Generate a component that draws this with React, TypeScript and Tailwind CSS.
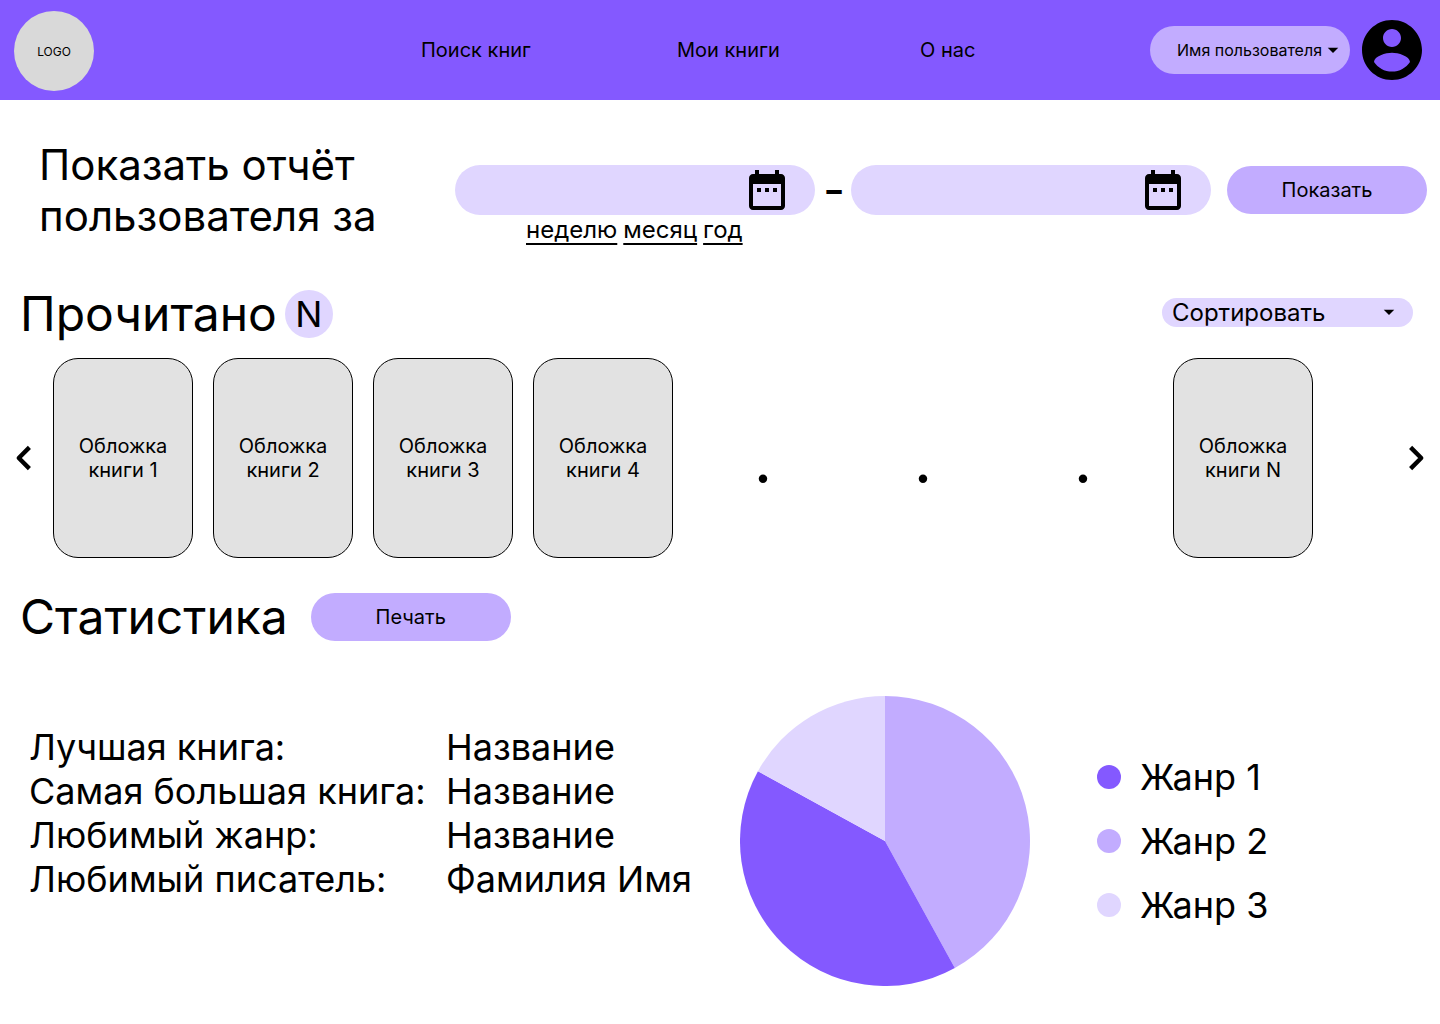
import React from "react";

const periods = ["неделю", "месяц", "год"];

const slots = [
  "Обложка книги 1",
  "Обложка книги 2",
  "Обложка книги 3",
  "Обложка книги 4",
  null,
  null,
  null,
  "Обложка книги N",
];

const stats = [
  ["Лучшая книга:", "Название"],
  ["Самая большая книга:", "Название"],
  ["Любимый жанр:", "Название"],
  ["Любимый писатель:", "Фамилия Имя"],
];

const legend = [
  { name: "Жанр 1", dot: "bg-[#8459ff]" },
  { name: "Жанр 2", dot: "bg-[#c2acff]" },
  { name: "Жанр 3", dot: "bg-[#e0d6ff]" },
];

const slices = [
  { from: 0, to: 0.42, fill: "fill-[#c2acff]" },
  { from: 0.42, to: 0.83, fill: "fill-[#8459ff]" },
  { from: 0.83, to: 1, fill: "fill-[#e0d6ff]" },
];

function slicePath(from: number, to: number) {
  const r = 145;
  const point = (part: number) => {
    const a = part * 2 * Math.PI;
    return `${r + r * Math.sin(a)} ${r - r * Math.cos(a)}`;
  };
  return `M${r} ${r}L${point(from)}A${r} ${r} 0 0 1 ${point(to)}Z`;
}

function Icon({ d, className, viewBox = "0 0 24 24" }: { d: string; className: string; viewBox?: string }) {
  return (
    <svg viewBox={viewBox} className={className} fill="currentColor" aria-hidden="true">
      <path d={d} />
    </svg>
  );
}

function Chevron({ points }: { points: string }) {
  return (
    <svg viewBox="0 0 24 24" className="size-12" fill="none" stroke="currentColor" strokeWidth="2.2" aria-hidden="true">
      <polyline points={points} strokeLinejoin="round" />
    </svg>
  );
}

const CARET = "M6.75 9.75l5.25 5.25 5.25-5.25z";
const CALENDAR =
  "M9 11H7v2h2v-2zm4 0h-2v2h2v-2zm4 0h-2v2h2v-2zm2-7h-1V2h-2v2H8V2H6v2H5c-1.11 0-1.99.9-1.99 2L3 20c0 1.1.89 2 2 2h14c1.1 0 2-.9 2-2V6c0-1.1-.9-2-2-2zm0 16H5V9h14v11z";
const ACCOUNT =
  "M12 2C6.48 2 2 6.48 2 12s4.48 10 10 10 10-4.48 10-10S17.52 2 12 2zm0 3c1.66 0 3 1.34 3 3s-1.34 3-3 3-3-1.34-3-3 1.34-3 3-3zm0 14.2c-2.5 0-4.71-1.28-6-3.22.03-1.99 4-3.08 6-3.08 1.99 0 5.97 1.09 6 3.08-1.29 1.94-3.5 3.22-6 3.22z";

function DateField({ label }: { label: string }) {
  return (
    <div className="flex h-[50px] min-w-0 flex-1 items-center rounded-full bg-[#e0d6ff] pr-6 pl-6">
      <input type="text" aria-label={label} className="w-0 min-w-0 flex-1 bg-transparent text-xl outline-none" />
      <button type="button" aria-label="Открыть календарь" className="shrink-0">
        <Icon d={CALENDAR} className="size-12" />
      </button>
    </div>
  );
}

export default function App() {
  return (
    <div className="min-h-screen bg-white font-['Inter',sans-serif] text-black">
      <header className="flex h-[100px] items-center bg-[#8459ff] pr-[18px] pl-3.5">
        <a
          href="#"
          className="mt-0.5 flex size-20 shrink-0 items-center justify-center rounded-full bg-[#d9d9d9] pt-0.5 text-xs"
        >
          LOGO
        </a>
        <nav className="ml-[327px] grid flex-1 grid-cols-[256fr_243fr_230fr] text-xl leading-6">
          <a href="#">Поиск книг</a>
          <a href="#">Мои книги</a>
          <a href="#">О нас</a>
        </nav>
        <button
          type="button"
          className="flex h-12 w-[200px] shrink-0 items-center justify-end rounded-full bg-[#c2acff] pr-[5px]"
        >
          <span className="whitespace-nowrap">Имя пользователя</span>
          <Icon d={CARET} className="-ml-px size-6" />
        </button>
        <a href="#" aria-label="Профиль" className="ml-3 shrink-0">
          <Icon d={ACCOUNT} viewBox="2 2 20 20" className="size-[60px]" />
        </a>
      </header>

      <main>
        <form className="flex items-start pt-[39px] pr-[13px] pl-[39px]">
          <h1 className="w-[416px] shrink-0 text-[42px] leading-[51px]">
            Показать отчёт
            <br />
            пользователя за
          </h1>
          <div className="min-w-0 flex-1 pt-[26px]">
            <div className="flex items-center">
              <DateField label="Начало периода" />
              <span className="w-9 shrink-0 pl-0.5 text-center text-5xl leading-[50px]">-</span>
              <DateField label="Конец периода" />
              <button
                type="button"
                className="ml-4 h-12 w-[200px] shrink-0 rounded-full bg-[#c2acff] text-xl leading-6"
              >
                Показать
              </button>
            </div>
            <div className="flex gap-1.5 pl-[71px] text-2xl leading-[29px]">
              {periods.map((p) => (
                <a key={p} href="#" className="underline underline-offset-[5px] [text-decoration-skip-ink:none]">
                  {p}
                </a>
              ))}
            </div>
          </div>
        </form>

        <section className="mt-[41px]">
          <div className="flex items-center pr-[27px] pl-5">
            <h2 className="text-5xl leading-[58px]">Прочитано</h2>
            <span className="ml-2 flex size-12 items-center justify-center rounded-full bg-[#e0d6ff] text-4xl">N</span>
            <div className="relative mb-[3px] ml-auto">
              <select
                aria-label="Сортировать"
                className="block h-[29px] w-[251px] appearance-none rounded-full bg-[#e0d6ff] pl-2.5 text-2xl leading-[29px]"
              >
                <option>Сортировать</option>
              </select>
              <Icon d={CARET} className="pointer-events-none absolute top-0.5 right-3 size-6" />
            </div>
          </div>
          <div className="mt-[15px] flex items-center">
            <button type="button" aria-label="Назад" className="shrink-0">
              <Chevron points="14.7,6.7 9.4,12 14.7,17.3" />
            </button>
            <ul className="mr-[79px] ml-[5px] grid flex-1 grid-cols-8 gap-5">
              {slots.map((title, i) =>
                title ? (
                  <li
                    key={i}
                    className="flex h-[200px] items-center justify-center rounded-[25px] border border-black bg-[#e2e2e2] px-5 text-center text-xl leading-6"
                  >
                    {title}
                  </li>
                ) : (
                  <li key={i} className="flex h-[200px] items-center justify-center pt-1 text-[64px]">
                    .
                  </li>
                ),
              )}
            </ul>
            <button type="button" aria-label="Вперёд" className="shrink-0">
              <Chevron points="9.3,6.7 14.6,12 9.3,17.3" />
            </button>
          </div>
        </section>

        <section className="mt-[30px]">
          <div className="flex items-center pl-5">
            <h2 className="text-5xl leading-[58px]">Статистика</h2>
            <button type="button" className="ml-[23px] h-12 w-[200px] rounded-full bg-[#c2acff] text-xl leading-6">
              Печать
            </button>
          </div>
          <div className="mt-[50px] flex items-start pl-[29px]">
            <table className="mt-[29px] w-[711px] text-left text-4xl leading-[44px]">
              <tbody>
                {stats.map(([label, value]) => (
                  <tr key={label}>
                    <th scope="row" className="w-[414px] p-0 font-normal whitespace-nowrap">
                      {label}
                    </th>
                    <td className="p-0 pl-[3px] whitespace-nowrap">{value}</td>
                  </tr>
                ))}
              </tbody>
            </table>
            <svg viewBox="0 0 290 290" className="size-[290px] shrink-0" role="img" aria-label="Жанры">
              {slices.map((s) => (
                <path key={s.from} d={slicePath(s.from, s.to)} className={s.fill} />
              ))}
            </svg>
            <ul className="mt-[59px] ml-[67px] flex flex-col gap-5 text-4xl leading-[44px]">
              {legend.map((g) => (
                <li key={g.name} className="flex items-center gap-[19px]">
                  <span className={`size-6 rounded-full ${g.dot}`} />
                  {g.name}
                </li>
              ))}
            </ul>
          </div>
        </section>
      </main>
    </div>
  );
}
